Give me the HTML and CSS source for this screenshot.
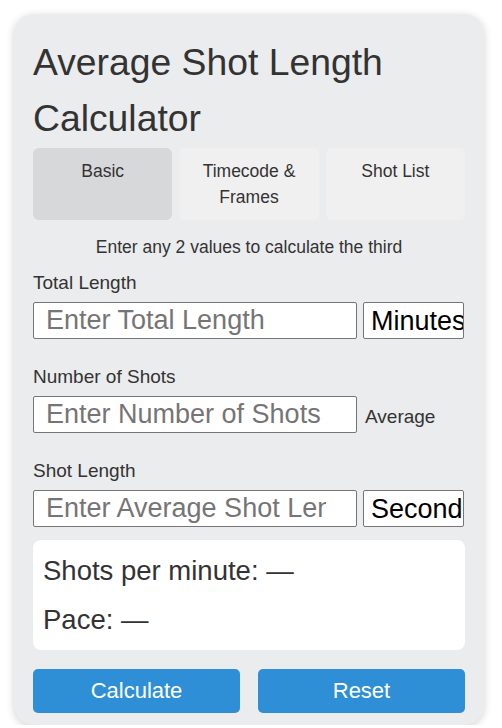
FILE: index.html
```html
<!DOCTYPE html>
<html>
<head>
    <meta charset="utf-8"/>
    <title>Average Shot Length Calculator</title>
    <link rel="stylesheet" href="styles.css">
</head>
<body>

<div class="calc">
    <h1 class="calc-title">Average Shot Length Calculator</h1>

    <div class="tabs">
        <div class="tab active">Basic</div>
        <div class="tab">Timecode &amp;<br/>Frames</div>
        <div class="tab">Shot List</div>
    </div>

    <p class="note">Enter any 2 values to calculate the third</p>

    <div class="field">
        <label class="field-label">Total Length</label>
        <div class="field-row">
            <input class="field-input" type="text" placeholder="Enter Total Length">
            <select class="field-unit">
                <option>Minutes</option>
                <option>Seconds</option>
            </select>
        </div>
    </div>

    <div class="field">
        <label class="field-label">Number of Shots</label>
        <div class="field-row">
            <input class="field-input" type="text" placeholder="Enter Number of Shots">
            <span class="field-text">Average</span>
        </div>
    </div>

    <div class="field last">
        <label class="field-label">Shot Length</label>
        <div class="field-row">
            <input class="field-input" type="text" placeholder="Enter Average Shot Length">
            <select class="field-unit">
                <option>Seconds</option>
                <option>Minutes</option>
            </select>
        </div>
    </div>

    <div class="result">
        <div>Shots per minute: &mdash;</div>
        <div>Pace: &mdash;</div>
    </div>

    <div class="actions">
        <button class="btn">Calculate</button>
        <button class="btn">Reset</button>
    </div>
</div>

</body>
</html>
```

FILE: styles.css
```css
body {
    margin: 0;
    background: #fff;
    font-family: 'Liberation Sans', Arial, sans-serif;
    color: #333;
}

.calc {
    box-sizing: border-box;
    width: 470px;
    margin: 14px 0 0 14px;
    padding: 20px 19px 12px;
    background: #ebeced;
    border-radius: 20px;
    box-shadow: 0 2px 8px rgba(0, 0, 0, 0.18);
}

.calc-title {
    margin: 0 0 2px;
    font-size: 37.3px;
    font-weight: normal;
    line-height: 56px;
}

.tabs {
    display: flex;
    gap: 7px;
}

.tab {
    flex: 1;
    height: 72px;
    box-sizing: border-box;
    padding-top: 10px;
    text-align: center;
    font-size: 17.5px;
    line-height: 26px;
    background: #f0f0f0;
    border-radius: 6px;
}

.tab.active {
    background: #d7d8da;
}

.note {
    margin: 17px 0 15px;
    text-align: center;
    font-size: 17.5px;
    line-height: 20px;
}

.field {
    margin-bottom: 27px;
}

.field.last {
    margin-bottom: 13px;
}

.field-label {
    display: block;
    margin-bottom: 8px;
    font-size: 19px;
    line-height: 22px;
}

.field-row {
    display: flex;
    align-items: center;
}

.field-input,
.field-unit {
    box-sizing: border-box;
    height: 37px;
    border: 1px solid #767676;
    border-radius: 2px;
    background: #fff;
    font-family: 'Liberation Sans', Arial, sans-serif;
    font-size: 27px;
}

.field-input {
    width: 324px;
    padding: 0 30px 0 12px;
    color: #000;
}

.field-input::placeholder {
    color: #757575;
}

.field-unit {
    width: 101px;
    margin-left: 6px;
    padding: 0 0 0 7px;
    color: #000;
    -webkit-appearance: none;
    appearance: none;
}

.field-text {
    margin-left: 8px;
    padding-top: 4px;
    font-size: 19px;
}

.result {
    padding: 6px 10px;
    background: #fff;
    border-radius: 8px;
    font-size: 27.5px;
    line-height: 49px;
}

.actions {
    display: flex;
    gap: 18px;
    margin-top: 19px;
}

.btn {
    flex: 1;
    height: 44px;
    border: 0;
    border-radius: 5px;
    background: #2e8fd6;
    color: #fff;
    font-family: 'Liberation Sans', Arial, sans-serif;
    font-size: 22px;
}
```
